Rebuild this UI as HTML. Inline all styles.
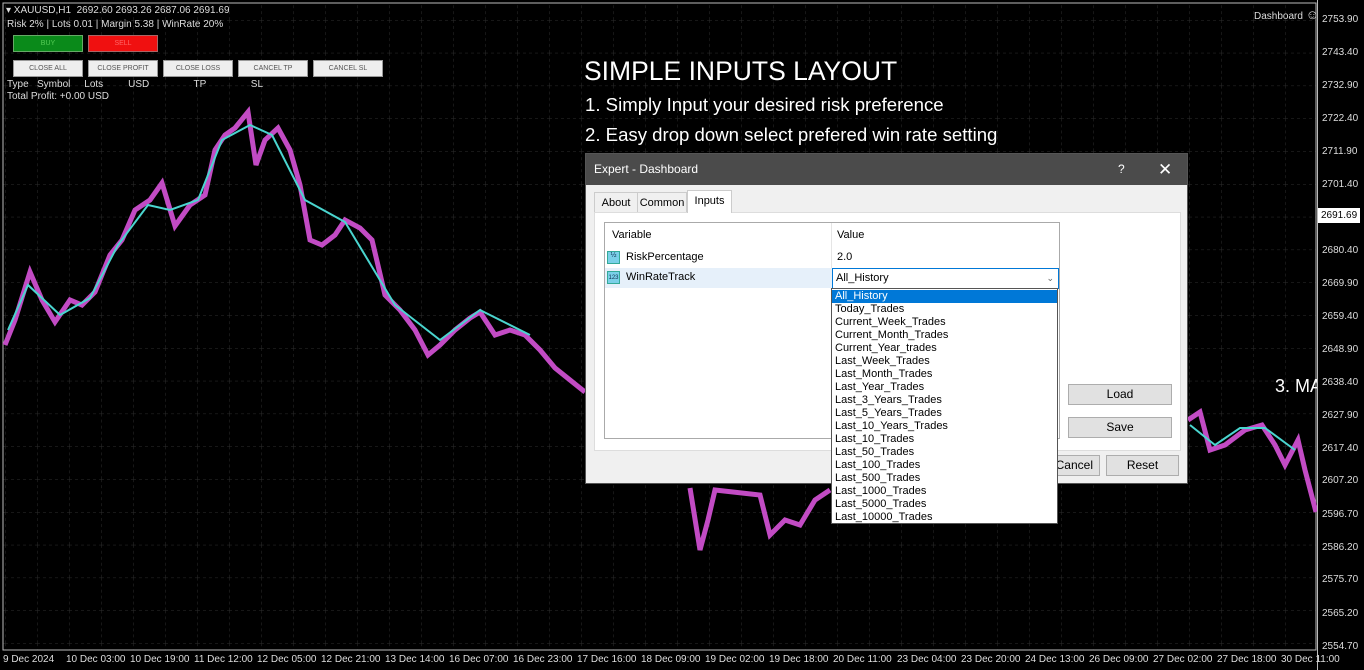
<!DOCTYPE html>
<html><head><meta charset="utf-8"><style>
*{margin:0;padding:0;box-sizing:border-box}
body{width:1364px;height:670px;background:#000;overflow:hidden;position:relative;font-family:"Liberation Sans",sans-serif;color:#fff}
.a{position:absolute;white-space:nowrap}
.sm{font-size:10px;color:#ddd}
.btn{position:absolute;height:17px;background:#eee;border:1px solid #999;color:#555;font-size:7px;text-align:center;line-height:15px}
.dl{font-family:"Liberation Sans",sans-serif;color:#000}
.pb{position:absolute;background:#e1e1e1;border:1px solid #adadad;font-size:12px;color:#000;text-align:center}
.li{height:13px;line-height:13px;font-size:11px;padding-left:3px;color:#000}
</style></head><body>
<svg class="a" style="left:0;top:0" width="1364" height="670">
<defs><pattern id="g" x="5" y="20" width="32" height="32.8" patternUnits="userSpaceOnUse"><path d="M0 0H32M0 0V32.8" stroke="#2e2e2e" stroke-dasharray="3 3" fill="none"/></pattern></defs>
<rect x="3" y="3" width="1313" height="647" fill="url(#g)"/>
<path d="M3 3H1316V650H3Z" stroke="#bbb" fill="none"/>
<polyline fill="none" stroke="#c24bc4" stroke-width="5" points="5,345 15,320 30,272 42,300 55,322 70,300 82,305 95,292 110,255 122,240 135,210 150,200 162,183 175,226 190,205 205,195 215,150 225,135 235,128 248,112 256,165 265,140 278,128 290,150 300,185 310,240 322,245 335,235 345,220 360,228 372,240 385,295 400,310 415,330 428,355 440,345 455,330 470,318 480,312 495,335 510,330 525,335 540,350 555,368 570,380 585,392"/>
<polyline fill="none" stroke="#4ad5cf" stroke-width="2" points="8,330 28,285 60,315 90,298 118,245 148,205 170,210 198,200 222,140 250,125 272,135 305,200 345,222 395,305 440,340 480,310 530,335"/>
<polyline fill="none" stroke="#c24bc4" stroke-width="5" points="690,488 700,550 708,520 715,490 760,495 770,535 785,520 800,525 815,500 830,490"/>
<polyline fill="none" stroke="#c24bc4" stroke-width="5" points="1188,420 1200,412 1210,450 1225,445 1245,430 1262,425 1275,445 1285,465 1298,440 1305,470 1316,512"/>
<polyline fill="none" stroke="#4ad5cf" stroke-width="2" points="1190,425 1215,445 1240,428 1265,428 1295,450"/>
</svg>
<div class="a sm" style="left:6px;top:5px">▾ XAUUSD,H1&nbsp; 2692.60 2693.26 2687.06 2691.69</div>
<div class="a sm" style="left:7px;top:19px">Risk 2% | Lots 0.01 | Margin 5.38 | WinRate 20%</div>
<div class="btn" style="left:13px;top:35px;width:70px;background:#0a8a1a;border-color:#6a6;color:#5c5">BUY</div>
<div class="btn" style="left:88px;top:35px;width:70px;background:#f01010;border-color:#a66;color:#f66">SELL</div>
<div class="btn" style="left:13px;top:60px;width:70px">CLOSE ALL</div>
<div class="btn" style="left:88px;top:60px;width:70px">CLOSE PROFIT</div>
<div class="btn" style="left:163px;top:60px;width:70px">CLOSE LOSS</div>
<div class="btn" style="left:238px;top:60px;width:70px">CANCEL TP</div>
<div class="btn" style="left:313px;top:60px;width:70px">CANCEL SL</div>
<div class="a sm" style="left:7px;top:79px">Type&nbsp;&nbsp; Symbol&nbsp;&nbsp;&nbsp;&nbsp; Lots&nbsp;&nbsp;&nbsp;&nbsp;&nbsp;&nbsp;&nbsp;&nbsp; USD&nbsp;&nbsp;&nbsp;&nbsp;&nbsp;&nbsp;&nbsp;&nbsp;&nbsp;&nbsp;&nbsp;&nbsp;&nbsp;&nbsp;&nbsp; TP&nbsp;&nbsp;&nbsp;&nbsp;&nbsp;&nbsp;&nbsp;&nbsp;&nbsp;&nbsp;&nbsp;&nbsp;&nbsp;&nbsp;&nbsp; SL</div>
<div class="a sm" style="left:7px;top:91px">Total Profit: +0.00 USD</div>
<div class="a sm" style="left:1254px;top:7px">Dashboard <span style="font-size:13px">☺</span></div>
<div class="a" style="left:584px;top:56px;font-size:26.5px">SIMPLE INPUTS LAYOUT</div>
<div class="a" style="left:585px;top:94px;font-size:18.6px">1. Simply Input your desired risk preference</div>
<div class="a" style="left:585px;top:124px;font-size:18.6px">2. Easy drop down select prefered win rate setting</div>
<div class="a" style="left:1275px;top:376px;font-size:18px">3. MA</div>
<div class="a" style="left:1317px;top:0;width:47px;height:670px;background:#000;border-left:1px solid #bbb"></div>
<div class="a sm" style="left:1322px;top:14px">2753.90</div><div class="a sm" style="left:1322px;top:47px">2743.40</div><div class="a sm" style="left:1322px;top:80px">2732.90</div><div class="a sm" style="left:1322px;top:113px">2722.40</div><div class="a sm" style="left:1322px;top:146px">2711.90</div><div class="a sm" style="left:1322px;top:179px">2701.40</div>
<div class="a" style="left:1318px;top:208px;width:42px;height:15px;background:#fff;color:#000;font-size:10px;line-height:15px;padding-left:3px">2691.69</div>
<div class="a sm" style="left:1322px;top:245px">2680.40</div><div class="a sm" style="left:1322px;top:278px">2669.90</div><div class="a sm" style="left:1322px;top:311px">2659.40</div><div class="a sm" style="left:1322px;top:344px">2648.90</div><div class="a sm" style="left:1322px;top:377px">2638.40</div><div class="a sm" style="left:1322px;top:410px">2627.90</div><div class="a sm" style="left:1322px;top:443px">2617.40</div><div class="a sm" style="left:1322px;top:475px">2607.20</div><div class="a sm" style="left:1322px;top:509px">2596.70</div><div class="a sm" style="left:1322px;top:542px">2586.20</div><div class="a sm" style="left:1322px;top:574px">2575.70</div><div class="a sm" style="left:1322px;top:608px">2565.20</div><div class="a sm" style="left:1322px;top:641px">2554.70</div>
<div class="a sm" style="left:3px;top:654px">9 Dec 2024</div>
<div class="a sm" style="left:66px;top:654px">10 Dec 03:00</div><div class="a sm" style="left:130px;top:654px">10 Dec 19:00</div><div class="a sm" style="left:194px;top:654px">11 Dec 12:00</div><div class="a sm" style="left:257px;top:654px">12 Dec 05:00</div><div class="a sm" style="left:321px;top:654px">12 Dec 21:00</div><div class="a sm" style="left:385px;top:654px">13 Dec 14:00</div><div class="a sm" style="left:449px;top:654px">16 Dec 07:00</div><div class="a sm" style="left:513px;top:654px">16 Dec 23:00</div><div class="a sm" style="left:577px;top:654px">17 Dec 16:00</div><div class="a sm" style="left:641px;top:654px">18 Dec 09:00</div><div class="a sm" style="left:705px;top:654px">19 Dec 02:00</div><div class="a sm" style="left:769px;top:654px">19 Dec 18:00</div><div class="a sm" style="left:833px;top:654px">20 Dec 11:00</div><div class="a sm" style="left:897px;top:654px">23 Dec 04:00</div><div class="a sm" style="left:961px;top:654px">23 Dec 20:00</div><div class="a sm" style="left:1025px;top:654px">24 Dec 13:00</div><div class="a sm" style="left:1089px;top:654px">26 Dec 09:00</div><div class="a sm" style="left:1153px;top:654px">27 Dec 02:00</div><div class="a sm" style="left:1217px;top:654px">27 Dec 18:00</div><div class="a sm" style="left:1281px;top:654px">30 Dec 11:00</div>

<div class="a dl" style="left:585px;top:153px;width:603px;height:331px;background:#f0f0f0;border:1px solid #555">
 <div style="height:31px;background:#4b4b4b;color:#fff;font-size:12px;line-height:31px;padding-left:8px;position:relative">Expert - Dashboard<span style="position:absolute;left:532px">?</span><span style="position:absolute;left:572px;font-size:17px">✕</span></div>
 <div class="a" style="left:8px;top:38px;width:44px;height:20px;border:1px solid #ccc;border-bottom:none;font-size:11px;line-height:20px;text-align:center;background:#f0f0f0">About</div>
 <div class="a" style="left:51px;top:38px;width:50px;height:20px;border:1px solid #ccc;border-bottom:none;font-size:11px;line-height:20px;text-align:center">Common</div>
 <div class="a" style="left:101px;top:36px;width:45px;height:23px;border:1px solid #ccc;border-bottom:none;background:#fff;font-size:11px;line-height:20px;text-align:center;z-index:2">Inputs</div>
 <div class="a" style="left:8px;top:58px;width:587px;height:239px;background:#fff;border:1px solid #ddd"></div>
 <div class="a" style="left:18px;top:68px;width:456px;height:217px;border:1px solid #aaa;background:#fff">
  <div class="a" style="left:7px;top:6px;font-size:11px">Variable</div>
  <div class="a" style="left:226px;top:0;height:45px;border-left:1px solid #e5e5e5"></div>
  <div class="a" style="left:232px;top:6px;font-size:11px">Value</div>
  <div class="a" style="left:2px;top:28px;width:13px;height:13px;background:#7ad0e8;border:1px solid #3a9;font-size:7px;color:#135;text-align:center">½</div>
  <div class="a" style="left:21px;top:28px;font-size:11px">RiskPercentage</div>
  <div class="a" style="left:232px;top:28px;font-size:11px">2.0</div>
  <div class="a" style="left:0;top:45px;width:454px;height:20px;background:#e6f0fa"></div>
  <div class="a" style="left:2px;top:48px;width:13px;height:13px;background:#7ad0e8;border:1px solid #3a9;font-size:6px;color:#135;text-align:center;line-height:12px">123</div>
  <div class="a" style="left:21px;top:48px;font-size:11px">WinRateTrack</div>
  <div class="a" style="left:227px;top:45px;width:227px;height:21px;border:1px solid #0078d7;background:#fff;font-size:11px;line-height:19px;padding-left:3px">All_History<span style="position:absolute;right:4px;color:#666;font-size:9px">⌄</span></div>
 </div>
 <div class="pb" style="left:482px;top:230px;width:104px;height:21px;line-height:19px">Load</div>
 <div class="pb" style="left:482px;top:263px;width:104px;height:21px;line-height:19px">Save</div>
 <div class="pb" style="left:440px;top:301px;width:74px;height:21px;line-height:19px;text-align:right;padding-right:6px">Cancel</div>
 <div class="pb" style="left:520px;top:301px;width:73px;height:21px;line-height:19px">Reset</div>
</div>
<div class="a" style="left:831px;top:288px;width:227px;height:236px;background:#fff;border:1px solid #555;padding-top:1px">
 <div class="li" style="background:#0078d7;color:#fff">All_History</div>
 <div class="li">Today_Trades</div><div class="li">Current_Week_Trades</div><div class="li">Current_Month_Trades</div><div class="li">Current_Year_trades</div><div class="li">Last_Week_Trades</div><div class="li">Last_Month_Trades</div><div class="li">Last_Year_Trades</div><div class="li">Last_3_Years_Trades</div><div class="li">Last_5_Years_Trades</div><div class="li">Last_10_Years_Trades</div><div class="li">Last_10_Trades</div><div class="li">Last_50_Trades</div><div class="li">Last_100_Trades</div><div class="li">Last_500_Trades</div><div class="li">Last_1000_Trades</div><div class="li">Last_5000_Trades</div><div class="li">Last_10000_Trades</div>
</div>
</body></html>
